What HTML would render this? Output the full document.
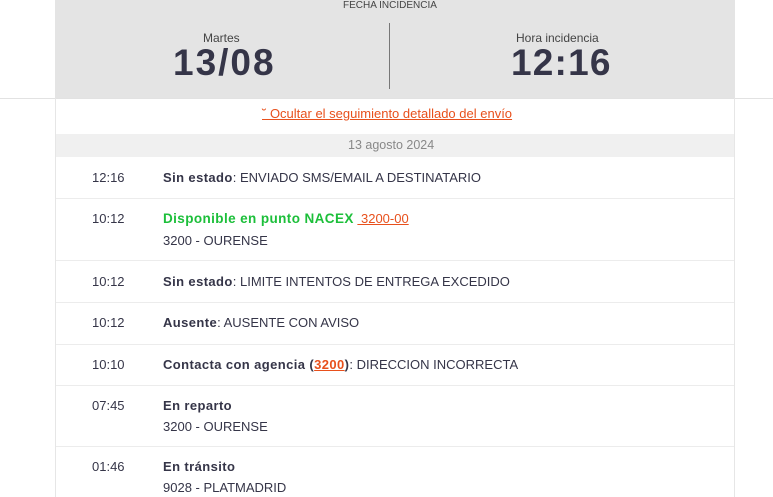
<!DOCTYPE html>
<html><head><meta charset="utf-8"><style>
*{margin:0;padding:0;box-sizing:border-box}
body{width:773px;height:497px;overflow:hidden;background:#fff;font-family:"Liberation Sans",sans-serif;color:#353548;position:relative}
.a{position:absolute;white-space:nowrap}
.hd{position:absolute;left:55px;top:0;width:680px;height:98px;background:#e4e4e4}
.hl{position:absolute;left:0;width:773px;top:98px;height:1px;background:#e2e2e2}
.vl{position:absolute;top:98px;width:1px;height:399px;background:#e6e6e6}
.sep{position:absolute;left:56px;width:678px;height:1px;background:#ececec}
.t{font-size:13px;color:#353548;left:92px}
.d{font-size:13px;color:#353548;left:163px}
b{font-weight:bold;letter-spacing:0.4px}
.or{color:#e8501c;text-decoration:underline}
</style></head><body>
<div class="hd"></div>
<div class="hl"></div>
<div class="vl" style="left:55px"></div>
<div class="vl" style="left:734px"></div>
<div class="a" style="left:343px;top:0;font-size:10px;color:#444">FECHA INCIDENCIA</div>
<div class="a" style="left:389px;top:23px;width:1px;height:66px;background:#777"></div>
<div class="a" style="left:203px;top:31px;font-size:12px;color:#444">Martes</div>
<div class="a" style="left:173px;top:42px;font-size:37px;font-weight:bold;color:#353548;letter-spacing:2px">13/08</div>
<div class="a" style="left:516px;top:31px;font-size:12px;color:#444">Hora incidencia</div>
<div class="a" style="left:511px;top:42px;font-size:37px;font-weight:bold;color:#353548;letter-spacing:1.2px">12:16</div>
<div class="a or" style="left:262px;top:106px;font-size:13px">˘ Ocultar el seguimiento detallado del envío</div>
<div class="a" style="left:56px;top:134px;width:678px;height:23px;background:#f0f0f0"></div>
<div class="a" style="left:348px;top:138px;font-size:12.5px;color:#888">13 agosto 2024</div>

<div class="a t" style="top:170px">12:16</div>
<div class="a d" style="top:170px"><b>Sin estado</b>: ENVIADO SMS/EMAIL A DESTINATARIO</div>
<div class="sep" style="top:198px"></div>
<div class="a t" style="top:211px">10:12</div>
<div class="a d" style="top:211px"><b style="color:#1cbf3a;font-size:13.5px">Disponible en punto NACEX</b> <span class="or">&nbsp;3200-00</span></div>
<div class="a d" style="top:233px">3200 - OURENSE</div>
<div class="sep" style="top:260px"></div>
<div class="a t" style="top:274px">10:12</div>
<div class="a d" style="top:274px"><b>Sin estado</b>: LIMITE INTENTOS DE ENTREGA EXCEDIDO</div>
<div class="sep" style="top:302px"></div>
<div class="a t" style="top:315px">10:12</div>
<div class="a d" style="top:315px"><b>Ausente</b>: AUSENTE CON AVISO</div>
<div class="sep" style="top:344px"></div>
<div class="a t" style="top:357px">10:10</div>
<div class="a d" style="top:357px"><b>Contacta con agencia (<span class="or">3200</span>)</b>: DIRECCION INCORRECTA</div>
<div class="sep" style="top:385px"></div>
<div class="a t" style="top:398px">07:45</div>
<div class="a d" style="top:398px"><b>En reparto</b></div>
<div class="a d" style="top:419px">3200 - OURENSE</div>
<div class="sep" style="top:446px"></div>
<div class="a t" style="top:459px">01:46</div>
<div class="a d" style="top:459px"><b>En tránsito</b></div>
<div class="a d" style="top:480px">9028 - PLATMADRID</div>
</body></html>
